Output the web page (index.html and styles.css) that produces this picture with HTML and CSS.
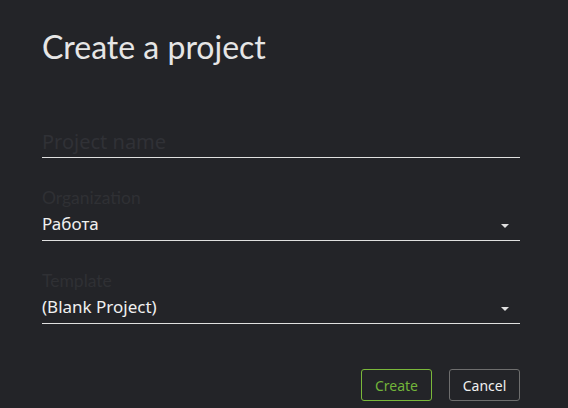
FILE: index.html
```html
<!DOCTYPE html>
<html lang="en">
  <head>
    <meta charset="UTF-8" />
    <title>Create a project</title>
    <link rel="stylesheet" href="styles.css">
  </head>
  <body>
    <div class="dialog">
      <h1>Create a project</h1>

      <div class="field">
        <input type="text" class="text-input" placeholder="Project name" />
      </div>

      <div class="field">
        <label>Organization</label>
        <div class="select">
          <span>Работа</span>
          <span class="caret"></span>
        </div>
      </div>

      <div class="field">
        <label>Template</label>
        <div class="select">
          <span>(Blank Project)</span>
          <span class="caret"></span>
        </div>
      </div>

      <div class="actions">
        <button class="btn btn-primary">Create</button>
        <button class="btn">Cancel</button>
      </div>
    </div>
  </body>
</html>
```

FILE: styles.css
```css
* {
  box-sizing: border-box;
  margin: 0;
  padding: 0;
}

body {
  background-color: #232428;
  font-family: "Noto Sans", sans-serif;
  color: #e8e8e8;
}

.dialog {
  padding: 26px 48px 0 42px;
}

h1 {
  font-family: Lato, sans-serif;
  font-weight: 400;
  font-size: 32px;
  line-height: 42px;
  color: #e6e6e6;
  margin-bottom: 53px;
}

.field {
  margin-bottom: 31px;
}

label {
  display: block;
  font-family: Lato, sans-serif;
  font-size: 17.5px;
  line-height: 18px;
  color: #2f3034;
}

.text-input {
  width: 100%;
  background: none;
  border: none;
  border-bottom: 1px solid #e0e0e0;
  font-family: "Noto Sans", sans-serif;
  font-size: 20px;
  height: 37px;
  padding-top: 4px;
  color: #e8e8e8;
  outline: none;
}

.text-input::placeholder {
  color: #303136;
}

.select {
  display: flex;
  align-items: center;
  justify-content: space-between;
  border-bottom: 1px solid #e0e0e0;
  height: 34px;
  font-size: 17px;
  color: #f0f0f0;
  padding-right: 11px;
}

.caret {
  width: 0;
  height: 0;
  border-left: 4px solid transparent;
  border-right: 4px solid transparent;
  border-top: 4px solid #e0e0e0;
  margin-top: 4px;
}

.actions {
  display: flex;
  justify-content: flex-end;
  gap: 17px;
  margin-top: 45px;
}

.btn {
  background: none;
  border: 1px solid #6e6e6e;
  border-radius: 3px;
  color: #f0f0f0;
  font-family: "Noto Sans", sans-serif;
  font-size: 14px;
  height: 32px;
  width: 71px;
  cursor: pointer;
}

.btn-primary {
  border-color: #7ab83a;
  color: #72b43a;
}
```
